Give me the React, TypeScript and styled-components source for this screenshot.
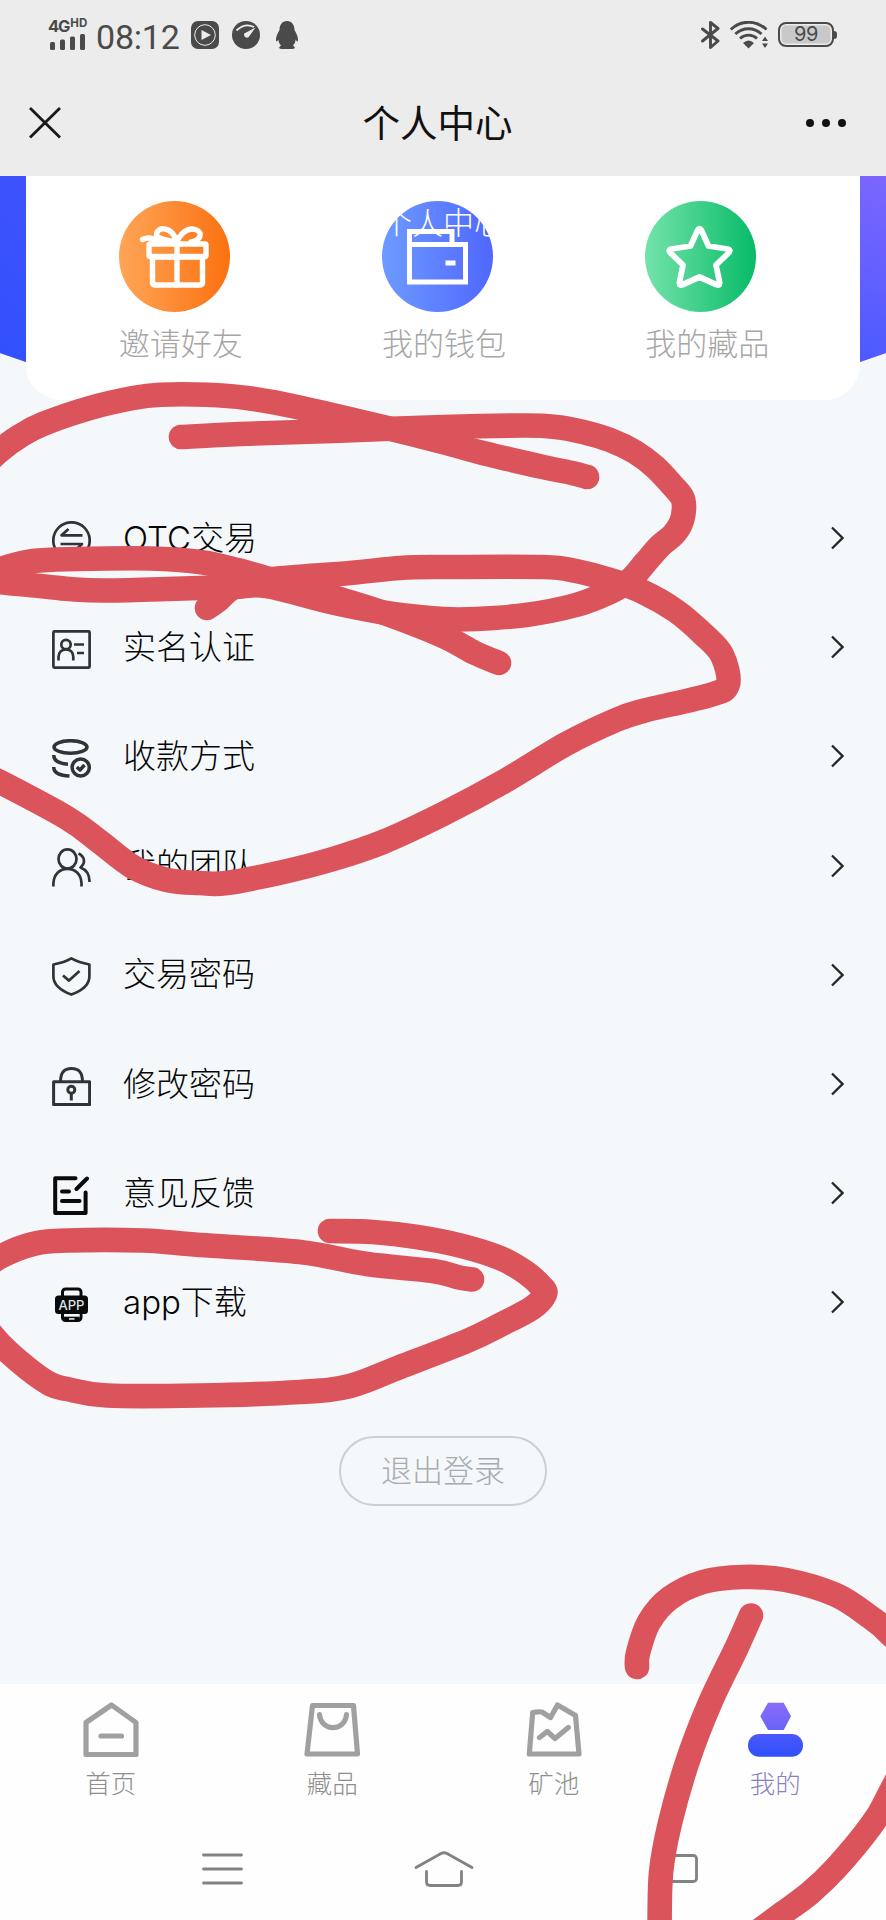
import React from 'react';
import styled, { createGlobalStyle } from 'styled-components';

const GlobalStyle = createGlobalStyle`
  * { box-sizing: border-box; }
  html, body { margin: 0; padding: 0; background: #fefefe; }
  body { font-family: Inter, "Noto Sans CJK SC", sans-serif; }
`;

const Screen = styled.div`
  position: relative;
  display: flex;
  flex-direction: column;
  width: 886px;
  height: 1920px;
  overflow: hidden;
  background: #f4f8fb;
`;

const StatusBar = styled.div`
  display: flex;
  justify-content: space-between;
  align-items: center;
  height: 69px;
  padding: 0 48px 0 48px;
  background: #ececec;
  color: #4a4a4a;
`;

const StatusGroup = styled.div<{ $gap: number }>`
  display: flex;
  align-items: center;
  gap: ${(p) => p.$gap}px;
`;

const Signal = styled.div`
  display: flex;
  flex-direction: column;
  width: 39px;
  height: 32px;
`;

const Network = styled.div`
  display: flex;
  align-items: flex-start;
  height: 14px;
  font: 700 16.5px/14px Inter, sans-serif;
  letter-spacing: -1.1px;
  small { margin-left: 1px; font-size: 11.5px; line-height: 9px; letter-spacing: 0; }
`;

const Clock = styled.span`
  font: 400 34px/40px Roboto, sans-serif;
  letter-spacing: -0.2px;
  margin-left: 9px;
  margin-right: 11px;
  padding-top: 4px;
`;

const Battery = styled.div`
  position: relative;
  display: flex;
  align-items: center;
  justify-content: center;
  width: 56px;
  height: 25px;
  margin-right: 4px;
  border: 2px solid #4a4a4a;
  border-radius: 8px;
  background: #c9c9c9;
  box-shadow: inset 0 0 0 1.5px #ececec;
  font: 400 20px/23px Inter, sans-serif;
  letter-spacing: -0.5px;
  &::after {
    content: '';
    position: absolute;
    right: -5px;
    top: 7px;
    width: 3px;
    height: 8px;
    border-radius: 0 3px 3px 0;
    background: #4a4a4a;
  }
`;

const TitleBar = styled.header`
  display: grid;
  grid-template-columns: 120px 1fr 120px;
  align-items: center;
  height: 107px;
  padding: 0 40px 0 29px;
  background: #ececec;
`;

const PageTitle = styled.h1`
  margin: 0;
  padding-top: 2px;
  text-align: center;
  font-size: 37.5px;
  font-weight: 400;
  line-height: 50px;
  color: #111;
`;

const MoreDots = styled.div`
  display: flex;
  gap: 8px;
  justify-content: flex-end;
  i { width: 8px; height: 8px; border-radius: 50%; background: #111; }
`;

const Hero = styled.section`
  position: relative;
  height: 224px;
  padding: 0 26px;
  &::before {
    content: '';
    position: absolute;
    inset: 0 0 38px 0;
    background: linear-gradient(to top, rgba(40, 80, 255, 0.55), rgba(40, 80, 255, 0)),
      linear-gradient(to right, #3d52fc, #7c66ff);
    clip-path: polygon(0 0, 100% 0, 100% 177px, 860px 186px, 26px 186px, 0 177px);
  }
`;

const QuickCard = styled.div`
  position: relative;
  display: flex;
  gap: 139.2px;
  height: 224px;
  padding: 25px 0 0 92.8px;
  background: #fff;
  border-radius: 0 0 35px 35px;
`;

const QuickItem = styled.div`
  display: flex;
  flex-direction: column;
  width: 124px;
  color: #a6a6a6;
  font-weight: 300;
  font-size: 31px;
  line-height: 40px;
  white-space: nowrap;
`;

const Bubble = styled.div<{ $from: string; $to: string }>`
  width: 111px;
  height: 111px;
  margin-bottom: 12px;
  border-radius: 50%;
  background: linear-gradient(to right, ${(p) => p.$from}, ${(p) => p.$to});
  svg { display: block; }
`;

const FloatingTitle = styled.div`
  position: absolute;
  left: 0;
  right: 0;
  top: 27px;
  text-align: center;
  font-size: 31px;
  font-weight: 300;
  line-height: 40px;
  color: #fff;
`;

const Menu = styled.ul`
  list-style: none;
  margin: 0;
  padding: 83.5px 42px 0 52px;
`;

const MenuRow = styled.li`
  display: flex;
  align-items: center;
  height: 109.2px;
  svg { flex: none; }
`;

const MenuIcon = styled.svg<{ $line?: number; $ink?: string }>`
  width: 39px;
  height: 39px;
  margin-top: 4px;
  fill: none;
  stroke: ${(p) => p.$ink || '#2f3438'};
  stroke-width: ${(p) => p.$line || 2.7};
  stroke-linejoin: round;
`;

const MenuLabel = styled.span`
  flex: 1;
  margin: -1px 0 0 32px;
  font-size: 33px;
  font-weight: 300;
  line-height: 44px;
  color: #060606;
`;

const Logout = styled.button`
  align-self: center;
  width: 208px;
  height: 70px;
  margin: 79px 0 0;
  padding: 0 0 1px;
  border: 2px solid #cdd0d2;
  border-radius: 35px;
  background: transparent;
  color: #a9acae;
  font: 300 31px/40px Inter, "Noto Sans CJK SC", sans-serif;
`;

const Bottom = styled.footer`
  margin-top: auto;
  height: 236px;
  background: #fefefe;
`;

const Tabs = styled.nav`
  display: grid;
  grid-template-columns: repeat(4, 1fr);
  height: 133px;
  padding-top: 18px;
`;

const Tab = styled.div<{ $active?: boolean }>`
  display: flex;
  flex-direction: column;
  align-items: center;
  gap: 9px;
  font-size: 25.5px;
  font-weight: 300;
  line-height: 34px;
  color: ${(p) => (p.$active ? '#8c7fc4' : '#8f8f8f')};
  svg { fill: none; stroke: #a0a0a0; stroke-width: 5.2; stroke-linejoin: round; stroke-linecap: round; }
`;

const SystemNav = styled.div`
  display: flex;
  justify-content: space-between;
  align-items: center;
  height: 103px;
  padding: 0 187px 0 201px;
  svg { fill: none; stroke: #828282; stroke-width: 2.8; stroke-linecap: round; stroke-linejoin: round; }
  svg:nth-child(2) { margin-right: 11px; }
`;

const Ink = styled.svg`
  position: absolute;
  inset: 0;
  pointer-events: none;
  fill: none;
  stroke: #dc545b;
  stroke-width: 24.6;
  stroke-linecap: round;
  stroke-linejoin: round;
`;

type Point = [number, number];

/* Smooth curve through every sampled point of a pen stroke. */
function smooth(points: Point[]): string {
  let d = `M${points[0][0]} ${points[0][1]}`;
  for (let i = 0; i < points.length - 1; i++) {
    const a = points[Math.max(i - 1, 0)];
    const b = points[i];
    const c = points[i + 1];
    const e = points[Math.min(i + 2, points.length - 1)];
    d += `C${b[0] + (c[0] - a[0]) / 6} ${b[1] + (c[1] - a[1]) / 6} ${c[0] - (e[0] - b[0]) / 6} ${
      c[1] - (e[1] - b[1]) / 6
    } ${c[0]} ${c[1]}`;
  }
  return d;
}

const strokes: Point[][] = [
  [[181, 437], [240, 434], [333, 431], [443, 427], [526, 425.5], [556, 427], [583, 432], [610, 440], [635, 452],
    [655, 467], [672, 485], [682, 497], [684, 508], [681, 523], [673, 535], [660, 546], [645, 563], [630, 580],
    [610, 592], [576, 605], [526, 615], [476, 619], [443, 619],
    [393, 614], [335, 603], [267, 586], [233, 587], [167, 589], [103, 590.5], [70, 589], [40, 586], [0, 582], [-30, 578]],
  [[-30, 478], [0, 450.5], [20, 436], [43, 424], [90, 408], [133, 398], [160, 394.7], [207, 394.7], [247, 398],
    [297, 407], [383, 427], [443, 442], [483, 453], [543, 467], [572, 473], [587, 477]],
  [[207, 608], [217, 601], [236, 586], [273, 579], [350, 573], [400, 568], [443, 567], [543, 567], [576, 571],
    [610, 580], [643, 592], [676, 611], [703, 634], [722, 655], [728, 684], [710, 695], [643, 711], [616, 720],
    [566, 744], [503, 782], [443, 814], [383, 842], [333, 859], [283, 872], [227, 883], [200, 883], [167, 880],
    [133, 867], [100, 842], [67, 818], [0, 782], [-30, 768]],
  [[-30, 578], [0, 569], [33, 561], [77, 559], [150, 558.5], [200, 562], [237, 570], [283, 583], [343, 600],
    [387, 614], [443, 636], [475, 653], [499, 663]],
  [[330, 1231], [373, 1232], [417, 1237], [460, 1245.5], [500, 1258], [525, 1272], [541, 1286], [545, 1294],
    [532, 1308], [500, 1325], [467, 1341], [400, 1367], [350, 1386], [300, 1392], [200, 1395.5], [107, 1395.5],
    [67, 1389], [50, 1384], [27, 1368], [0, 1344], [-20, 1320]],
  [[-25, 1275], [0, 1257], [33, 1244], [67, 1240.5], [143, 1240.5], [200, 1245], [300, 1252], [367, 1264],
    [433, 1271], [457, 1277], [472, 1279.5]],
  [[637, 1667], [638, 1653], [649, 1622], [670, 1598], [703, 1582], [743, 1577], [786, 1580], [836, 1595],
    [870, 1617], [888, 1632], [915, 1665], [918, 1730], [888, 1797], [870, 1827], [836, 1868], [810, 1893],
    [783, 1913], [760, 1930]],
  [[751, 1615.5], [736, 1649], [710, 1703], [688, 1760], [670, 1823], [661, 1873], [659.5, 1935]],
];

const menuItems: { label: string; icon: React.ReactNode }[] = [
  {
    label: 'OTC交易',
    icon: (
      <MenuIcon viewBox="0 0 39 39">
        <circle cx="19.5" cy="19.5" r="18.2" />
        <path d="M16.5 8L9.5 14.3H30.5M8.5 23H30L23 29.5" />
      </MenuIcon>
    ),
  },
  {
    label: '实名认证',
    icon: (
      <MenuIcon viewBox="0 0 39 39">
        <rect x="1.4" y="1.4" width="36.2" height="36.2" rx="1" />
        <circle cx="14" cy="14.5" r="4.7" />
        <path d="M6.5 30.5V27Q7 19.5 14 19.5T21.3 27V30.5M22 14.5H32M25 23H32" />
      </MenuIcon>
    ),
  },
  {
    label: '收款方式',
    icon: (
      <MenuIcon viewBox="0 0 39 39" $line={3.5}>
        <ellipse cx="18.5" cy="8" rx="16.5" ry="6.3" />
        <path d="M1.8 16C1.5 21.5 7 24.5 16 25.2M1.8 28C1.5 34 8 36.6 17.5 37" />
        <circle cx="28.7" cy="28.500" r="8.6" />
        <path d="M24.800 28L28 31L32.500 26" />
      </MenuIcon>
    ),
  },
  {
    label: '我的团队',
    icon: (
      <MenuIcon viewBox="0 0 39 39">
        <ellipse cx="15.5" cy="11" rx="9" ry="9.6" />
        <path d="M1.400 38.500V35C2 26 8 20.800 15.500 20.800S29 26 29.500 35V38.500M26.500 5.500C32 8 34.500 14.500 28.500 19.500C34 21.500 37.500 26 37.600 34" />
      </MenuIcon>
    ),
  },
  {
    label: '交易密码',
    icon: (
      <MenuIcon viewBox="0 0 39 39">
        <path d="M19.300 1.400C24 4 31 6.300 37.400 7.500V19.500C37.400 28.500 29 34 19.300 37.600C10 34 1.400 28.500 1.400 19.500V7.500C8 6.300 15 4 19.300 1.400ZM11 18.500L17 23.600L27.500 14" />
      </MenuIcon>
    ),
  },
  {
    label: '修改密码',
    icon: (
      <MenuIcon viewBox="0 0 39 39" $line={3}>
        <rect x="1.600" y="14.800" width="36" height="22.800" />
        <path d="M8.500 14.800C8.500 5.500 12 1.600 19.500 1.600S30.500 5.500 30.500 14.800M19.300 26V33.500" />
        <circle cx="19.300" cy="22.800" r="3.500" />
      </MenuIcon>
    ),
  },
  {
    label: '意见反馈',
    icon: (
      <MenuIcon viewBox="0 0 39 39" $ink="#0a0a0a" $line={4} strokeLinecap="round">
        <path d="M23.500 2.200H3.200V37H33.600V16.500M35 2.500L24.500 13M10 15.500H17M10 25H27.500" />
      </MenuIcon>
    ),
  },
  {
    label: 'app下载',
    icon: (
      <MenuIcon viewBox="0 0 39 39" $ink="#0a0a0a" $line={3}>
        <rect x="10.500" y="4" width="18.500" height="31.500" rx="3" />
        <rect x="3" y="10.500" width="33" height="18.500" rx="3.500" fill="#0a0a0a" stroke="none" />
        <rect x="12" y="29.500" width="15.500" height="2.200" fill="#f4f8fb" stroke="none" />
        <rect x="12" y="31.700" width="15.500" height="4" fill="#0a0a0a" stroke="none" />
        <rect x="17" y="33.200" width="5.500" height="1.500" fill="#f4f8fb" stroke="none" />
        <text x="19.500" y="24.500" textAnchor="middle" fontFamily="Inter" fontSize="13" fontWeight="500" fill="#dfe2e4" stroke="none">
          APP
        </text>
      </MenuIcon>
    ),
  },
];

const whiteLine = { fill: 'none', stroke: '#fff', strokeWidth: 5.4, strokeLinejoin: 'round', strokeLinecap: 'round' } as const;

export default function App() {
  return (
    <Screen>
      <GlobalStyle />
      <StatusBar>
        <StatusGroup $gap={0}>
          <Signal>
            <Network>4G<small>HD</small></Network>
            <svg width="39" height="18" fill="#4a4a4a">
              <rect x="2" y="9" width="5" height="8" rx="1.5" />
              <rect x="12" y="6.500" width="5" height="10.500" rx="1.500" />
              <rect x="22" y="3.500" width="5" height="13.500" rx="1.500" />
              <rect x="32" y="1" width="5" height="16" rx="1.500" />
            </svg>
          </Signal>
          <Clock>08:12</Clock>
          <StatusGroup $gap={13}>
            <svg width="28" height="28" viewBox="0 0 28 28">
              <rect width="28" height="28" rx="7" fill="#4a4a4a" />
              <circle cx="14" cy="14" r="10.300" fill="none" stroke="#ececec" strokeWidth="1" />
              <path d="M10.500 9L20 14L10.500 19Z" fill="#ececec" />
            </svg>
            <svg width="28" height="28" viewBox="0 0 28 28">
              <circle cx="14" cy="14" r="14" fill="#4a4a4a" />
              <path d="M4.500 9.500Q13 1.500 22 6" fill="none" stroke="#ececec" strokeWidth="1.800" />
              <path d="M23.500 6.500L16.500 16.200A3 3 0 0 1 12.200 12.500Z" fill="#ececec" />
            </svg>
            <svg width="28" height="28" viewBox="0 0 28 28" fill="#4a4a4a">
              <path d="M14 0C19 0 21.500 4 21.500 9C23 12 25 15 25 18.500C25 21 24 21 22.600 18.500C22.500 21 21.500 23 20 24.500C23 26.500 22 28 18.500 28H9.500C6 28 5 26.500 8 24.500C6.500 23 5.500 21 5.400 18.500C4 21 3 21 3 18.500C3 15 5 12 6.500 9C6.500 4 9 0 14 0Z" />
            </svg>
          </StatusGroup>
        </StatusGroup>
        <StatusGroup $gap={10}>
          <svg width="19" height="28" viewBox="0 0 19 28" fill="none" stroke="#4a4a4a" strokeWidth="2.900" strokeLinejoin="round" strokeLinecap="round">
            <path d="M1.500 8L17 20L9.500 26.500V1.500L17 7.500L1.500 20" />
          </svg>
          <svg width="38" height="28" viewBox="0 0 38 28" fill="none" stroke="#4a4a4a" strokeWidth="2.900">
            <path d="M.8 8.500C11-1.200 26-1.200 36.500 8.500M5.300 13C13 6 24 6 31.500 13M10 17.500C15 13 22 13 27 17.500" />
            <path d="M13 22Q18.500 17 24 22L18.500 27.500Z" fill="#4a4a4a" stroke="none" />
            <path d="M35 15.500L38 20H32ZM35 27L38 22.500H32Z" fill="#4a4a4a" stroke="none" />
          </svg>
          <Battery>99</Battery>
        </StatusGroup>
      </StatusBar>

      <TitleBar>
        <svg width="32" height="32" viewBox="0 0 32 32" fill="none" stroke="#191919" strokeWidth="2.800">
          <path d="M1 1L31 30.500M31 1L1 30.500" />
        </svg>
        <PageTitle>个人中心</PageTitle>
        <MoreDots><i /><i /><i /></MoreDots>
      </TitleBar>

      <Hero>
        <QuickCard>
          <QuickItem>
            <Bubble $from="#ffa557" $to="#fb7110">
              <svg width="111" height="111" viewBox="0 0 111 111" {...whiteLine}>
                <rect x="33.500" y="56" width="50" height="28" rx="2" />
                <rect x="30" y="43" width="57" height="12.500" rx="1" />
                <path d="M58 42V84M58 41C51 40 39 38 37.500 34C37.500 29 42 27 46 28C52 29 56 35 58 41C60 35 66 28 73 28C78 28 82 31 81 35C80 39 74 41 72 41M23.500 38.500C31 34.500 35 39 46 42" />
              </svg>
            </Bubble>
            邀请好友
          </QuickItem>
          <QuickItem>
            <Bubble $from="#6d9bff" $to="#5067ff">
              <svg width="111" height="111" viewBox="0 0 111 111" {...whiteLine} strokeWidth="5" strokeLinejoin="miter" strokeLinecap="butt">
                <path d="M27.500 43.500H83.500V81H27.500ZM27.500 43.500V30.500H70V43.500M63.500 62H73.500" />
              </svg>
            </Bubble>
            我的钱包
          </QuickItem>
          <QuickItem>
            <Bubble $from="#74e3ab" $to="#07bb67">
              <svg width="111" height="111" viewBox="0 0 111 111" {...whiteLine} strokeWidth="5.800">
                <path d="M52.500 29.500Q54.500 26 56.500 29.500L63.500 45L82.500 48Q86.500 49 83.500 52L71 64L74.500 81Q75 85.500 71 83.500L54.500 76L38 83.500Q34 85.500 34.500 81L38 64L25.500 52Q22.500 49 26.500 48L45.500 45Z" />
              </svg>
            </Bubble>
            我的藏品
          </QuickItem>
        </QuickCard>
        <FloatingTitle>个人中心</FloatingTitle>
      </Hero>

      <Menu>
        {menuItems.map((item) => (
          <MenuRow key={item.label}>
            {item.icon}
            <MenuLabel>{item.label}</MenuLabel>
            <svg width="13" height="24" viewBox="0 0 13 24" fill="none" stroke="#23282c" strokeWidth="2.300">
              <path d="M1 1.500L11.500 12L1 22.500" />
            </svg>
          </MenuRow>
        ))}
      </Menu>

      <Logout>退出登录</Logout>

      <Bottom>
        <Tabs>
          <Tab>
            <svg width="56" height="56">
              <path d="M28.500 3L53 20.500V52.500H3V20.500ZM18 34H38.500" />
            </svg>
            首页
          </Tab>
          <Tab>
            <svg width="56" height="56">
              <path d="M8.500 3.500H49.500L53.500 52H3ZM15.500 12.500C17 30 41 30 42.500 12.500" />
            </svg>
            藏品
          </Tab>
          <Tab>
            <svg width="56" height="56">
              <path d="M6.700 10.500Q12 9.500 16 10L24.500 15.500L31.500 3L49.500 13.500L53 52H3.300ZM13.500 35.500L21.300 29.500L29 36.500L42.300 25.500" />
            </svg>
            矿池
          </Tab>
          <Tab $active>
            <svg width="56" height="56">
              <defs>
                <linearGradient id="head" x1="0" y1="0" x2="0" y2="1">
                  <stop offset="0" stopColor="#8a6df9" />
                  <stop offset="1" stopColor="#6a62fa" />
                </linearGradient>
                <linearGradient id="torso" x1="0" y1="0" x2="0" y2="1">
                  <stop offset="0" stopColor="#4c58fb" />
                  <stop offset="1" stopColor="#2f50fb" />
                </linearGradient>
              </defs>
              <path d="M13.300 14.300L21 .7H36.700L44 14.300L36.700 28H21Z" fill="url(#head)" stroke="none" />
              <rect x="1" y="32" width="55" height="22.700" rx="11.300" fill="url(#torso)" stroke="none" />
            </svg>
            我的
          </Tab>
        </Tabs>
        <SystemNav>
          <svg width="43" height="32"><path d="M2.500 2H40.500M2.500 16H40.500M2.500 30H40.500" /></svg>
          <svg width="60" height="38">
            <path d="M2 17.500L27 3.500Q30 2 33 3.500L58 17.500M12.500 21.500V32Q12.500 35.500 16 35.500H44Q47.500 35.500 47.500 32V21.500" />
          </svg>
          <svg width="44" height="30"><rect x="1.500" y="1.500" width="40" height="26" rx="3" /></svg>
        </SystemNav>
      </Bottom>

      <Ink width="886" height="1920" viewBox="0 0 886 1920">
        {strokes.map((points, i) => (
          <path key={i} d={smooth(points)} />
        ))}
      </Ink>
    </Screen>
  );
}
